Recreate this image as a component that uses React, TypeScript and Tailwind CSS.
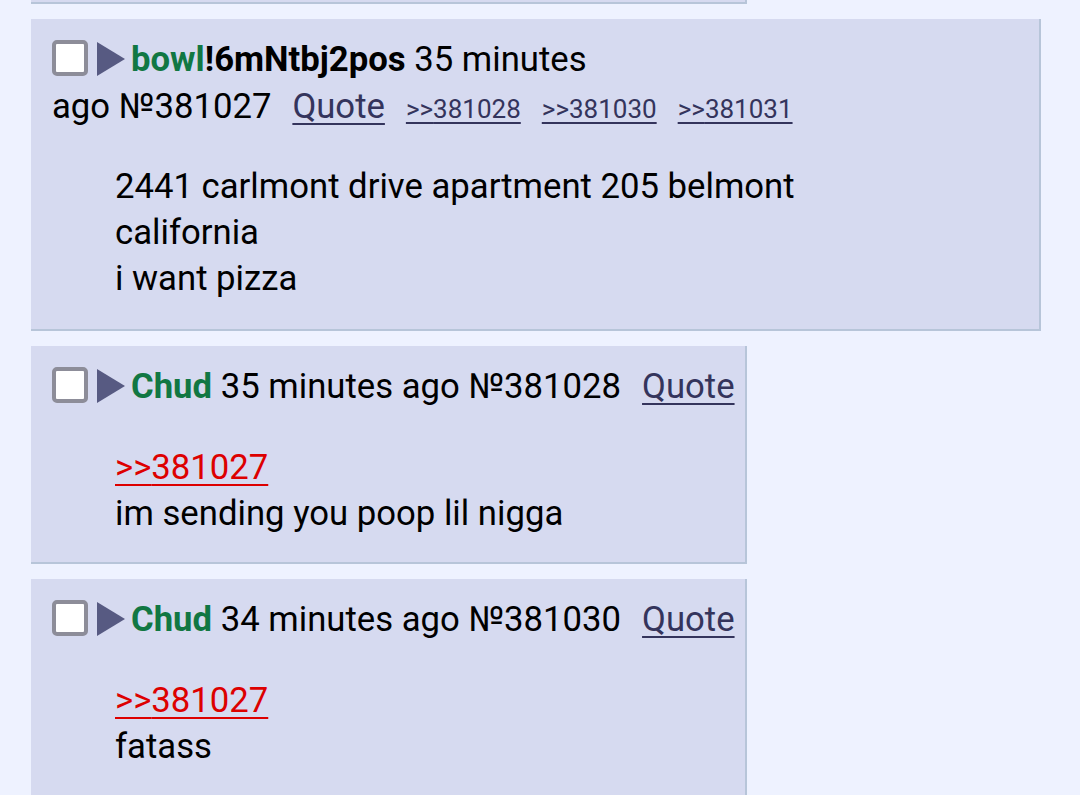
import React from 'react';

const PostHeadIcons: React.FC = () => (
  <>
    <span className="inline-block align-[-5px] w-[36px] h-[36px] rounded-[5px] border-[4px] border-[#8d8d99] bg-white mr-[9px]" />
    <svg className="inline-block align-[-5px] mr-[6px]" width="28" height="34" viewBox="0 0 28 34">
      <polygon points="0,0 28,17 0,34" fill="#575a82" />
    </svg>
  </>
);

type PostProps = {
  wide?: boolean;
  head: React.ReactNode;
  children: React.ReactNode;
};

const Post: React.FC<PostProps> = ({ wide, head, children }) => (
  <div
    className={`${wide ? 'w-[1010px] pb-[28px]' : 'w-[716px] pb-[26px]'} bg-[#d6daf0] border-r-2 border-b-2 border-[#b7c5d9] pl-[21px] pr-[8px] pt-[17px]`}
  >
    <div className="leading-[47px]">{head}</div>
    <div className={`${wide ? 'mt-[30px]' : 'mt-[34px]'} ml-[63px] leading-[46px]`}>{children}</div>
  </div>
);

const Quote: React.FC = () => (
  <a href="#" className="ml-[21px] text-[#34345c] underline underline-offset-[5px] decoration-[2px]">Quote</a>
);

const Backlink: React.FC<{ n: string }> = ({ n }) => (
  <a href="#" className="ml-[21px] text-[26px] text-[#34345c] underline underline-offset-[4px] decoration-[1.5px]">&gt;&gt;{n}</a>
);

const RedLink: React.FC<{ n: string }> = ({ n }) => (
  <a href="#" className="text-[#dd0000] underline underline-offset-[5px] decoration-[1.5px]">&gt;&gt;{n}</a>
);

export default function App() {
  return (
    <div
      className="h-[795px] overflow-hidden bg-[#eef2ff] text-[34.7px] text-black pl-[31px]"
      style={{ fontFamily: 'Roboto, "Noto Sans", sans-serif' }}
    >
      <div className="w-[716px] h-[4px] bg-[#d6daf0] border-r-2 border-b-2 border-[#b7c5d9]" />
      <div className="flex flex-col gap-[15px] mt-[15px]">
        <Post
          wide
          head={
            <>
              <PostHeadIcons />
              <span className="font-bold text-[#117743]">bowl</span>
              <span className="font-bold text-black">!6mNtbj2pos</span> 35 minutes
              <br />
              ago №381027
              <Quote />
              <Backlink n="381028" />
              <Backlink n="381030" />
              <Backlink n="381031" />
            </>
          }
        >
          2441 carlmont drive apartment 205 belmont
          <br />
          california
          <br />
          i want pizza
        </Post>
        <Post
          head={
            <>
              <PostHeadIcons />
              <span className="font-bold text-[#117743]">Chud</span> 35 minutes ago №381028
              <Quote />
            </>
          }
        >
          <RedLink n="381027" />
          <br />
          im sending you poop lil nigga
        </Post>
        <Post
          head={
            <>
              <PostHeadIcons />
              <span className="font-bold text-[#117743]">Chud</span> 34 minutes ago №381030
              <Quote />
            </>
          }
        >
          <RedLink n="381027" />
          <br />
          fatass
        </Post>
      </div>
    </div>
  );
}
